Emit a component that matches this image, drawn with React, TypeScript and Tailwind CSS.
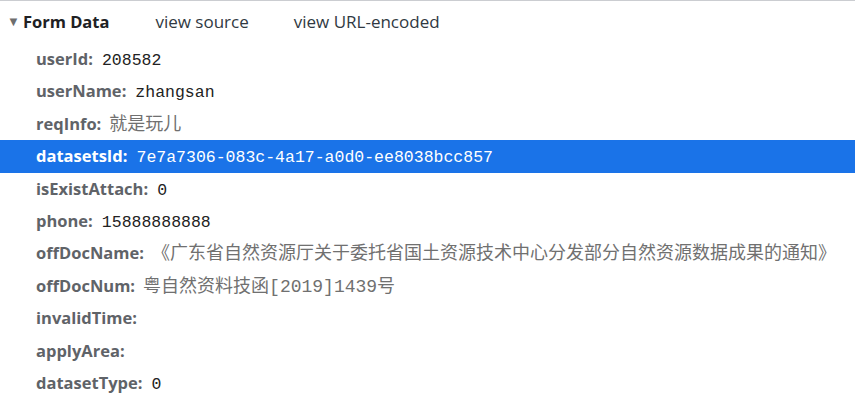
import React from 'react';

interface Field {
  name: string;
  value: string;
  cjk?: boolean;
}

const fields: Field[] = [
  { name: 'userId', value: '208582' },
  { name: 'userName', value: 'zhangsan' },
  { name: 'reqInfo', value: '就是玩儿', cjk: true },
  { name: 'datasetsId', value: '7e7a7306-083c-4a17-a0d0-ee8038bcc857' },
  { name: 'isExistAttach', value: '0' },
  { name: 'phone', value: '15888888888' },
  { name: 'offDocName', value: '《广东省自然资源厅关于委托省国土资源技术中心分发部分自然资源数据成果的通知》', cjk: true },
  { name: 'offDocNum', value: '粤自然资料技函[2019]1439号', cjk: true },
  { name: 'invalidTime', value: '' },
  { name: 'applyArea', value: '' },
  { name: 'datasetType', value: '0' },
];

const selected = 'datasetsId';

export default function App() {
  return (
    <div className="w-[855px] h-[407px] bg-white border-t border-[#cbcdd1] overflow-hidden font-['Open_Sans','Noto_Sans',sans-serif]">
      <div className="flex items-center h-[42px] pl-[7px]">
        <span className="text-[#6e6e6e] text-[13px] mr-[3px]">▼</span>
        <span className="font-bold text-[16.5px] text-[#202124]">Form Data</span>
        <span className="ml-[46px] text-[17px] text-[#303942]">view source</span>
        <span className="ml-[45px] text-[17px] text-[#303942]">view URL-encoded</span>
      </div>
      <div>
        {fields.map((f) => {
          const sel = f.name === selected;
          return (
            <div
              key={f.name}
              className={`h-[32.4px] leading-[32.4px] pl-[36px] whitespace-nowrap ${sel ? 'bg-[#1a73e8]' : ''}`}
            >
              <span className={`font-bold text-[16.5px] ${sel ? 'text-white' : 'text-[#5f6368]'}`}>{f.name}:</span>
              {f.cjk ? (
                <span
                  className={`ml-[8px] text-[18px] font-['Liberation_Mono','Noto_Sans_CJK_SC',monospace] ${sel ? 'text-white' : 'text-[#707070]'}`}
                >
                  {f.value}
                </span>
              ) : (
                <span
                  className={`ml-[9px] text-[16.5px] font-['Liberation_Mono',monospace] ${sel ? 'text-white' : 'text-[#222]'}`}
                >
                  {f.value}
                </span>
              )}
            </div>
          );
        })}
      </div>
    </div>
  );
}
